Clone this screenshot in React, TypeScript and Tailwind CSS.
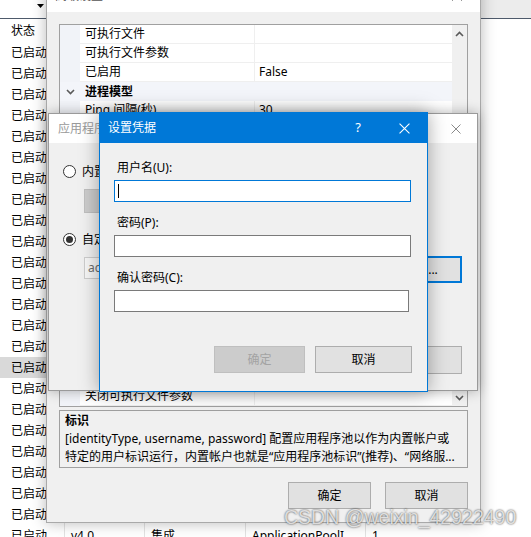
import React from "react";

const poolRows = Array.from({ length: 24 }, (_, i) => i);

function XIcon({ color, size = 10 }: { color: string; size?: number }) {
  return (
    <svg width={size} height={size} viewBox="0 0 10 10" className="block">
      <path d="M0.5 0.5 L9.5 9.5 M9.5 0.5 L0.5 9.5" stroke={color} strokeWidth="1" fill="none" />
    </svg>
  );
}

function Chevron({ up }: { up?: boolean }) {
  return (
    <svg width="9" height="6" viewBox="0 0 9 6" className="block">
      <path d={up ? "M1 5 L4.5 1.5 L8 5" : "M1 1 L4.5 4.5 L8 1"} stroke="#5a5a5a" strokeWidth="1.6" fill="none" />
    </svg>
  );
}

function Radio({ checked }: { checked?: boolean }) {
  return (
    <span className="flex h-[13px] w-[13px] items-center justify-center rounded-full border border-[#333] bg-white">
      {checked && <span className="h-[7px] w-[7px] rounded-full bg-[#333]" />}
    </span>
  );
}

function PoolList() {
  return (
    <div className="flex flex-col">
      <div className="relative h-[19px] border-b border-[#4e5a6b] bg-white">
        <div className="absolute right-0 top-0 h-[18px] w-[70px] bg-[#ececec]" />
        <svg width="7" height="4" viewBox="0 0 7 4" className="absolute left-[37px] top-[4px]">
          <path d="M0 0 H7 L3.5 4 Z" fill="#000" />
        </svg>
      </div>
      <div className="flex h-[23px] items-center pl-[11px]">状态</div>
      {poolRows.map((i) => (
        <div key={i} className={`flex h-[21px] w-[470px] items-center ${i === 15 ? "bg-[#d9d9d9]" : ""}`}>
          <div className="w-[64px] pl-[11px]">已启动</div>
          <div className="h-full w-[80px] border-l border-[#e3e3e3] pl-[6px] leading-[21px]">v4.0</div>
          <div className="h-full w-[101px] border-l border-[#e3e3e3] pl-[6px] leading-[21px]">集成</div>
          <div className="h-full w-[120px] overflow-hidden border-l border-[#e3e3e3] pl-[6px] leading-[21px]">ApplicationPoolI</div>
          <div className="h-full flex-1 border-l border-[#e3e3e3] pl-[6px] leading-[21px]">1</div>
        </div>
      ))}
    </div>
  );
}

function PropRow({ name, value }: { name: string; value?: string }) {
  return (
    <div className="flex h-[19px] shrink-0">
      <div className="w-[20px] bg-[#f1f3f8]" />
      <div className="w-[175px] border-b border-r border-[#efefef] pl-[5px] leading-[18px]">{name}</div>
      <div className="flex-1 border-b border-[#efefef] pl-[4px] leading-[18px]">{value}</div>
    </div>
  );
}

function CategoryRow({ name }: { name: string }) {
  return (
    <div className="flex h-[19px] shrink-0 bg-[#f3f5fa]">
      <div className="flex w-[20px] items-center justify-center">
        <Chevron />
      </div>
      <div className="pl-[5px] font-bold leading-[19px]">{name}</div>
    </div>
  );
}

function AdvancedSettings() {
  return (
    <div className="absolute left-[46px] top-[-18px] flex h-[541px] w-[435px] flex-col border border-[#a9a9a9] bg-[#f0f0f0] shadow-[0_0_14px_rgba(0,0,0,0.28)]">
      <div className="flex h-[29px] shrink-0 items-center bg-white pl-[8px] text-[#555]">
        <span className="-translate-y-[2px]">高级设置</span>
        <span className="ml-auto w-[46px] -translate-y-[2px] text-center text-[13px]">?</span>
        <span className="flex w-[46px] -translate-y-[2px] justify-center">
          <XIcon color="#333" />
        </span>
      </div>
      <div className="flex flex-1 flex-col px-[12px] pb-[13px] pt-[12px]">
        <div className="flex h-[383px] border border-[#a0a0a0] bg-white">
          <div className="flex flex-1 flex-col overflow-hidden">
            <PropRow name="可执行文件" />
            <PropRow name="可执行文件参数" />
            <PropRow name="已启用" value="False" />
            <CategoryRow name="进程模型" />
            <PropRow name="Ping 间隔(秒)" value="30" />
            <div className="flex flex-1 flex-col overflow-hidden">
              <PropRow name="Ping 最大响应时间(秒)" value="90" />
              <PropRow name="标识" value="ApplicationPoolIdentity" />
              <PropRow name="关闭时间限制(秒)" value="90" />
              <PropRow name="加载用户配置文件" value="True" />
              <PropRow name="启动时间限制(秒)" value="90" />
              <PropRow name="启用 Ping" value="True" />
              <PropRow name="空闲超时(分钟)" value="20" />
              <PropRow name="空闲超时操作" value="Terminate" />
              <PropRow name="最大工作进程数" value="1" />
              <CategoryRow name="进程孤立" />
              <PropRow name="已启用" value="False" />
              <PropRow name="可执行文件" />
              <PropRow name="可执行文件参数" />
              <CategoryRow name="快速故障防护" />
              <PropRow name="“服务不可用”响应类型" value="HttpLevel" />
              <PropRow name="故障间隔(分钟)" value="5" />
              <PropRow name="关闭可执行文件" />
            </div>
            <PropRow name="关闭可执行文件参数" />
          </div>
          <div className="flex w-[15px] flex-col justify-between bg-[#f0f0f0]">
            <div className="flex h-[17px] items-center justify-center">
              <Chevron up />
            </div>
            <div className="flex h-[17px] items-center justify-center">
              <Chevron />
            </div>
          </div>
        </div>
        <div className="mt-[3px] h-[58px] overflow-hidden whitespace-nowrap border border-[#a0a0a0] px-[5px] pt-[1px] leading-[18px]">
          <div className="font-bold">标识</div>
          <div>[identityType, username, password] 配置应用程序池以作为内置帐户或</div>
          <div>特定的用户标识运行，内置帐户也就是“应用程序池标识”(推荐)、“网络服...</div>
        </div>
        <div className="mt-[14px] flex justify-end gap-[14px]">
          <button className="h-[27px] w-[83px] border border-[#adadad] bg-[#e1e1e1]">确定</button>
          <button className="h-[27px] w-[83px] border border-[#adadad] bg-[#e1e1e1]">取消</button>
        </div>
      </div>
    </div>
  );
}

function PoolIdentityDialog() {
  return (
    <div className="absolute left-[48px] top-[113px] flex h-[278px] w-[430px] flex-col border border-[#9a9a9a] bg-[#f0f0f0] shadow-[0_0_12px_rgba(0,0,0,0.3)]">
      <div className="flex h-[29px] shrink-0 items-center bg-white pl-[9px] text-[#9a9a9a]">
        <span>应用程序池标识</span>
        <span className="ml-auto flex w-[42px] justify-center">
          <XIcon color="#8a8a8a" />
        </span>
      </div>
      <div className="flex flex-1 flex-col pb-[16px] pl-[14px] pr-[15px] pt-[22px]">
        <div className="flex items-center gap-[6px]">
          <Radio />
          <span className="leading-[13px]">内置帐户</span>
        </div>
        <div className="ml-[21px] mt-[11px] h-[24px] w-[260px] border border-[#bfbfbf] bg-[#cccccc]" />
        <div className="mt-[20px] flex items-center gap-[6px]">
          <Radio checked />
          <span className="leading-[13px]">自定义帐户</span>
        </div>
        <div className="mt-[10px] flex items-start">
          <div className="ml-[21px] mt-[1px] h-[22px] w-[280px] border border-[#cccccc] bg-[#f6f6f6] pl-[3px] leading-[20px] text-[#6d6d6d]">
            ac
          </div>
          <button className="ml-auto h-[27px] w-[82px] border-2 border-[#0078d7] bg-[#e1e1e1]">设置...</button>
        </div>
        <div className="mt-auto flex justify-end gap-[10px]">
          <button className="h-[28px] w-[90px] border border-[#adadad] bg-[#e1e1e1]">确定</button>
          <button className="h-[28px] w-[100px] border border-[#adadad] bg-[#e1e1e1]">取消</button>
        </div>
      </div>
    </div>
  );
}

function CredentialsDialog() {
  return (
    <div className="absolute left-[99px] top-[112px] flex h-[280px] w-[329px] flex-col border border-[#0078d7] bg-[#f0f0f0] shadow-[0_0_18px_rgba(0,0,0,0.35)]">
      <div className="flex h-[30px] shrink-0 items-center bg-[#0078d7] pl-[8px] text-white">
        <span>设置凭据</span>
        <span className="ml-auto w-[46px] text-center text-[13px]">?</span>
        <span className="flex w-[46px] justify-center">
          <XIcon color="#ffffff" size={11} />
        </span>
      </div>
      <div className="flex flex-1 flex-col pl-[14px] pt-[17px]">
        <div className="h-[16px] pl-[3px] leading-[16px]">用户名(U):</div>
        <div className="relative mt-[4px] h-[22px] w-[297px] border border-[#0078d7] bg-white">
          <span className="absolute left-[3px] top-[3px] h-[14px] w-px bg-black" />
        </div>
        <div className="mt-[13px] h-[16px] pl-[3px] leading-[16px]">密码(P):</div>
        <div className="mt-[4px] h-[22px] w-[297px] border border-[#7a7a7a] bg-white" />
        <div className="mt-[13px] h-[16px] pl-[3px] leading-[16px]">确认密码(C):</div>
        <div className="mt-[4px] h-[22px] w-[295px] border border-[#7a7a7a] bg-white" />
        <div className="mt-[34px] flex gap-[10px] pl-[100px]">
          <button className="h-[27px] w-[91px] border border-[#bfbfbf] bg-[#cccccc] text-[#a3a3a3]">确定</button>
          <button className="h-[27px] w-[97px] border border-[#adadad] bg-[#e1e1e1]">取消</button>
        </div>
      </div>
    </div>
  );
}

export default function App() {
  return (
    <div className="relative h-[537px] w-[531px] overflow-hidden bg-white font-['Noto_Sans','Noto_Sans_CJK_SC',sans-serif] text-[12px] text-black">
      <PoolList />
      <AdvancedSettings />
      <PoolIdentityDialog />
      <CredentialsDialog />
      <div className="absolute left-[284px] top-[505px] whitespace-nowrap font-['Liberation_Sans',sans-serif] text-[19.5px] leading-[24px] text-white/75 [text-shadow:0_0_2px_rgba(0,0,0,0.8)]">
        CSDN @weixin_42922490
      </div>
    </div>
  );
}
